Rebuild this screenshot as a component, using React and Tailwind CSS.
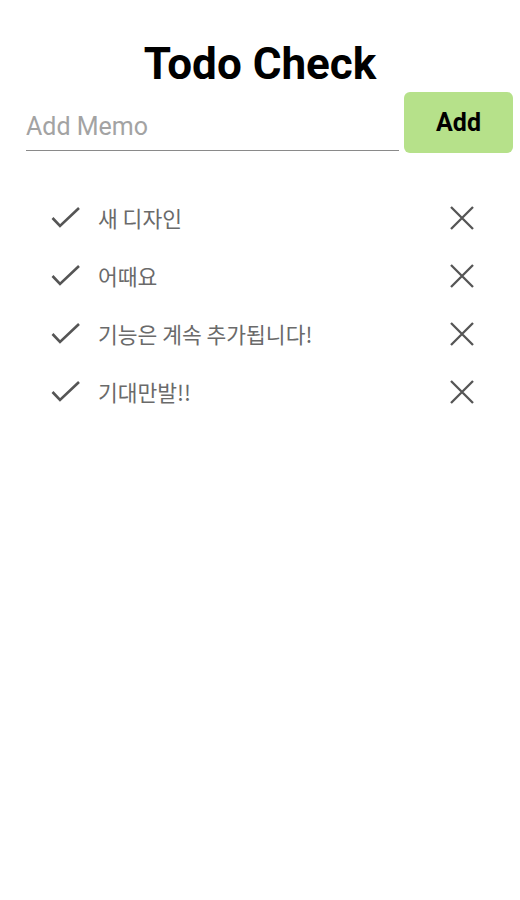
import React from "react";

const items = ["새 디자인", "어때요", "기능은 계속 추가됩니다!", "기대만발!!"];

function CheckIcon() {
  return (
    <svg width="30" height="24" viewBox="0 0 30 24" fill="none">
      <path d="M1.5 12 L9 20 L28 2" stroke="#555" strokeWidth="2.6" strokeLinecap="butt" strokeLinejoin="miter" />
    </svg>
  );
}

function CloseIcon() {
  return (
    <svg width="26" height="26" viewBox="0 0 26 26" fill="none">
      <path d="M2 2 L24 24 M24 2 L2 24" stroke="#555" strokeWidth="2.3" />
    </svg>
  );
}

export default function App() {
  return (
    <div className="w-[520px] h-[900px] bg-white" style={{ fontFamily: "Roboto, 'Noto Sans CJK KR', sans-serif" }}>
      <h1 className="pt-[38px] text-center text-[44px] leading-[52px] font-bold text-black">Todo Check</h1>
      <div className="mt-[2px] flex items-stretch pl-[26px] pr-[7px] gap-[5px]">
        <div className="flex-1 flex items-end">
          <div className="w-full border-b-[1.5px] border-[#8a8a8a] pb-[8px] mb-[2px] text-[25px] leading-[30px] font-normal text-[#a3a3a3]">Add Memo</div>
        </div>
        <button className="w-[109px] h-[61px] rounded-[6px] bg-[#b6e18a] text-[25px] font-bold text-black">Add</button>
      </div>
      <ul className="mt-[36px] flex flex-col">
        {items.map((t) => (
          <li key={t} className="h-[58px] flex items-center pl-[51px] pr-[45px]">
            <CheckIcon />
            <span className="ml-[17px] flex-1 text-[21.5px] text-[#6a6a6a]" style={{ fontFamily: "'Noto Sans CJK KR', Roboto, sans-serif" }}>{t}</span>
            <CloseIcon />
          </li>
        ))}
      </ul>
    </div>
  );
}
